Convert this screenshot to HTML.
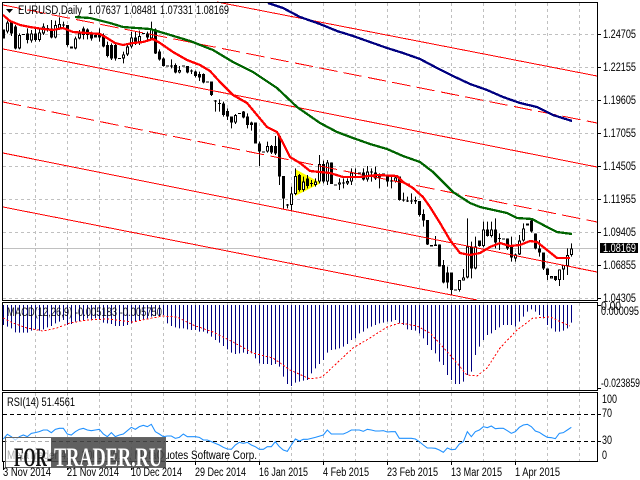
<!DOCTYPE html>
<html><head><meta charset="utf-8"><title>EURUSD</title>
<style>
html,body{margin:0;padding:0;background:#fff;width:640px;height:480px;overflow:hidden}
svg{display:block}
text{font-family:"Liberation Sans",sans-serif;font-size:11.5px;fill:#000}
.c{shape-rendering:crispEdges;fill:none}
</style></head><body>
<svg width="640" height="480" viewBox="0 0 640 480" xmlns="http://www.w3.org/2000/svg">
<rect width="640" height="480" fill="#fff"/>
<!-- grid -->
<path class="c" stroke="#c0c0c0" stroke-dasharray="3 3" d="M35.5 3V461M67.5 3V461M99.5 3V461M131.5 3V461M163.5 3V461M195.5 3V461M227.5 3V461M259.5 3V461M291.5 3V461M323.5 3V461M355.5 3V461M387.5 3V461M419.5 3V461M451.5 3V461M483.5 3V461M515.5 3V461M547.5 3V461M579.5 3V461"/>
<path class="c" stroke="#c0c0c0" stroke-dasharray="3 3" d="M3 34.5H597M3 67.5H597M3 100.5H597M3 133.5H597M3 166.5H597M3 199.5H597M3 232.5H597M3 265.5H597M3 298.5H597"/>
<path class="c" stroke="#c0c0c0" d="M3 248.5H597"/>
<!-- yellow triangle -->
<polygon points="295,169 321,183 295,196" fill="#ffff00"/>
<!-- candles group 1 -->
<g transform="scale(1 .33333)">
<path class="c" stroke="#000" d="M7.5 62V100M11.5 62V108M15.5 75V148M19.5 100V148M27.5 85V130M31.5 90V128M35.5 85V125M39.5 85V125M43.5 70V105M47.5 75V95M51.5 60V115M55.5 62V115M59.5 52V90M63.5 65V85M67.5 75V140M75.5 110V148M79.5 90V118M83.5 80V118M87.5 85V118M91.5 95V122M99.5 85V125M103.5 100V142M107.5 125V172M111.5 130V180M115.5 130V182M123.5 155V190M127.5 135V168M131.5 95V145M135.5 95V135M139.5 92V135M147.5 95V125M151.5 65V118M155.5 85V162M159.5 148V182M163.5 172V200M171.5 178V205M175.5 190V220M179.5 198V220M187.5 198V220M191.5 208V222M195.5 212V232M199.5 215V243M203.5 220V250M211.5 245V288M215.5 300V335M219.5 298V335M223.5 305V350M227.5 325V360M231.5 350V385M235.5 342V372M243.5 333V355M247.5 340V385M251.5 365V392M259.5 425V498M267.5 425V458M271.5 435V462M275.5 408V465M279.5 405V555M283.5 528V628M287.5 612V625M291.5 560V635M295.5 505V585M299.5 522V575M303.5 530V575M307.5 525V565M311.5 540V560"/>
<path class="c" stroke="#000" stroke-width="3" d="M3.5 88V115M7.5 68V95M11.5 68V100M15.5 80V145M19.5 105V145M23.5 102V105M27.5 100V120M31.5 100V122M35.5 100V120M39.5 97V120M43.5 80V100M47.5 84V87M51.5 85V113M55.5 75V113M59.5 72V85M63.5 74V77M67.5 75V135M71.5 140V145M75.5 115V145M79.5 100V115M83.5 85V105M87.5 88V105M91.5 100V115M95.5 105V112M99.5 100V112M103.5 105V140M107.5 135V168M111.5 135V175M115.5 135V175M119.5 174V177M123.5 163V175M127.5 140V163M131.5 112V140M135.5 112V130M139.5 108V130M143.5 99V102M147.5 100V112M151.5 88V115M155.5 88V160M159.5 155V178M163.5 175V198M167.5 197V200M171.5 196V199M175.5 195V218M179.5 210V218M183.5 197V200M187.5 198V218M191.5 212V215M195.5 215V228M199.5 222V232M203.5 222V248M207.5 244V247M211.5 245V285M215.5 302V305M219.5 309V312M223.5 310V345M227.5 333V350M231.5 350V368M235.5 345V368M239.5 339V342M243.5 335V352M247.5 350V375M251.5 368V375M255.5 368V430M259.5 430V455M263.5 454V457M267.5 438V455M271.5 438V458M275.5 438V460M279.5 408V530M283.5 528V595M287.5 614V617M291.5 580V615M295.5 528V582M299.5 525V570M303.5 545V570M307.5 535V558M311.5 549V552"/>
<path class="c" stroke="#fff" d="M7.5 71V92M19.5 108V142M31.5 103V119M39.5 100V117M43.5 83V97M55.5 78V110M59.5 75V82M75.5 118V142M79.5 103V112M123.5 166V172M127.5 143V160M131.5 115V137M139.5 111V127M151.5 91V112M179.5 213V215M235.5 348V365M267.5 441V452M291.5 583V612M295.5 531V579M303.5 548V567"/>
</g>
<!-- candles group 2 -->
<g transform="translate(0 150) scale(1 .33333)">
<path class="c" stroke="#000" d="M315.5 85V110M319.5 15V100M323.5 32V100M327.5 30V105M331.5 37V102M339.5 85V120M343.5 85V115M347.5 85V105M351.5 55V105M355.5 55V80M363.5 55V92M367.5 48V95M371.5 55V95M375.5 50V90M379.5 70V115M387.5 73V110M391.5 75V115M395.5 75V98M399.5 80V152M403.5 128V155M407.5 140V156M411.5 130V162M415.5 140V162M419.5 153V200M423.5 178V230M427.5 210V285M435.5 258V288M439.5 283V350"/>
<path class="c" stroke="#000" stroke-width="3" d="M315.5 95V105M319.5 42V95M323.5 42V95M327.5 37V95M331.5 37V102M335.5 103V107M339.5 97V103M343.5 97V100M347.5 93V100M351.5 68V95M355.5 69V72M359.5 67V70M363.5 67V88M367.5 65V88M371.5 64V67M375.5 68V85M379.5 75V82M383.5 70V78M387.5 73V95M391.5 91V94M395.5 82V95M399.5 80V150M403.5 149V152M407.5 152V155M411.5 152V155M415.5 150V155M419.5 153V195M423.5 192V212M427.5 210V283M431.5 285V290M435.5 283V288M439.5 283V350"/>
<path class="c" stroke="#fff" d="M315.5 98V102M319.5 45V92M327.5 40V92M339.5 100V101M347.5 96V97M351.5 71V92M367.5 68V85M379.5 78V79M395.5 85V92"/>
</g>
<!-- candles group 3 -->
<g transform="translate(0 200) scale(1 .33333)">
<path class="c" stroke="#000" d="M443.5 180V250M447.5 200V265M451.5 218V285M459.5 240V275M463.5 207V242M467.5 55V235M471.5 125V235M475.5 110V208M479.5 122V140M483.5 65V142M487.5 65V110M491.5 65V112M495.5 55V145M499.5 100V150M507.5 115V150M511.5 110V185M515.5 160V185M519.5 105V165M523.5 70V125M531.5 55V98M535.5 100V148M539.5 120V170M543.5 158V210M547.5 205V240M555.5 228V243M559.5 208V258M563.5 195V240M567.5 145V225M571.5 130V170"/>
<path class="c" stroke="#000" stroke-width="3" d="M443.5 195V248M447.5 218V248M451.5 218V270M455.5 269V272M459.5 240V270M463.5 232V242M467.5 140V232M471.5 140V205M475.5 140V205M479.5 122V138M483.5 88V138M487.5 88V108M491.5 88V108M495.5 88V128M499.5 114V117M503.5 116V119M507.5 115V145M511.5 140V172M515.5 163V175M519.5 122V163M523.5 85V122M527.5 70V76M531.5 62V95M535.5 100V145M539.5 145V158M543.5 158V205M547.5 205V225M551.5 228V235M555.5 228V240M559.5 208V240M563.5 195V208M567.5 165V198M571.5 145V165"/>
<path class="c" stroke="#fff" d="M459.5 243V267M463.5 235V239M467.5 143V229M475.5 143V202M483.5 91V135M491.5 91V105M515.5 166V172M519.5 125V160M523.5 88V119M551.5 231V232M559.5 211V237M563.5 198V205M567.5 168V195M571.5 148V162"/>
</g>
<!-- channel lines -->
<g class="c" stroke="#ff0000">
<path d="M217 2L597 76"/>
<path stroke-dasharray="18.5 6.3" d="M3 5L597 123"/>
<path d="M3 49L597 167"/>
<path stroke-dasharray="18.5 6.3" d="M3 102L597 222"/>
<path d="M3 153L597 272"/>
<path d="M3 207L477 300"/>
</g>
<!-- MAs -->
<polyline class="c" stroke="#ff0000" stroke-width="2.3" points="3,15 10,21 20,25 30,27 43,29 53,30 63,28 73,32 87,33 100,34 107,38 115,43 123,45 133,43 143,42 153,39 160,43 173,52 187,60 200,65 210,71 220,82 233,95 247,103 257,115 267,127 277,132 283,143 290,157 300,163 310,171 320,172 330,173 343,177 360,177 377,175 397,176 403,182 413,188 423,197 430,207 440,223 450,240 460,253 470,255 480,253 490,247 500,243 510,246 520,245 530,241 537,242 547,250 557,258 570,258"/>
<polyline class="c" stroke="#006400" stroke-width="2.3" points="75,17 90,18 110,23 123,27 150,29 167,34 190,41 213,50 233,62 253,72 277,88 297,107 320,123 337,132 353,138 370,144 387,149 403,156 420,162 433,172 453,192 470,203 480,207 507,213 517,218 532,219 547,227 557,232 572,234"/>
<polyline class="c" stroke="#000080" stroke-width="2.3" points="268,3 283,8 300,17 320,24 337,31 353,36 370,42 387,48 403,53 420,59 437,68 453,76 470,84 487,90 503,97 520,103 537,107 553,115 572,121"/>
<!-- MACD bars -->
<g transform="translate(0 240) scale(1 .33333)">
<path class="c" stroke="#000080" d="M3.5 195V255M7.5 195V260M11.5 195V265M15.5 195V277M19.5 195V278M23.5 195V278M27.5 195V278M31.5 195V272M35.5 195V268M39.5 195V272M43.5 195V268M47.5 195V262M51.5 195V258M55.5 195V250M59.5 195V245M63.5 195V240M67.5 195V255M71.5 195V252M75.5 195V245M79.5 195V243M83.5 195V240M87.5 195V235M91.5 195V238M95.5 195V235M99.5 195V240M103.5 195V248M107.5 195V250M111.5 195V252M115.5 195V258M119.5 195V258M123.5 195V258M127.5 195V255M131.5 195V250M135.5 195V245M139.5 195V240M143.5 195V238M147.5 195V235M151.5 195V230M155.5 195V228M159.5 195V228M163.5 195V225M167.5 195V250M171.5 195V258M175.5 195V262M179.5 195V265M183.5 195V265M187.5 195V268M191.5 195V270M195.5 195V270M199.5 195V275M203.5 195V275M207.5 195V280M211.5 195V290M215.5 195V300M219.5 195V308M223.5 195V318M227.5 195V328M231.5 195V338M235.5 195V342M239.5 195V340M243.5 195V338M247.5 195V342M251.5 195V340M255.5 195V355M259.5 195V370M263.5 195V372M267.5 195V372M271.5 195V375M275.5 195V372M279.5 195V380M283.5 195V410M287.5 195V432M291.5 195V438M295.5 195V428M299.5 195V425M303.5 195V422M307.5 195V420M311.5 195V400M315.5 195V385M319.5 195V372M323.5 195V360M327.5 195V338M331.5 195V330M335.5 195V328M339.5 195V325M343.5 195V320M347.5 195V312M351.5 195V300M355.5 195V295M359.5 195V280M363.5 195V275M367.5 195V265M371.5 195V260M375.5 195V255M379.5 195V250M383.5 195V248M387.5 195V245M391.5 195V245M395.5 195V240M399.5 195V250M403.5 195V255M407.5 195V268M411.5 195V270M415.5 195V272M419.5 195V280M423.5 195V295M427.5 195V315M431.5 195V330M435.5 195V340M439.5 195V365M443.5 195V375M447.5 195V405M451.5 195V420M455.5 195V432M459.5 195V432M463.5 195V425M467.5 195V405M471.5 195V395M475.5 195V345M479.5 195V320M483.5 195V300M487.5 195V285M491.5 195V280M495.5 195V270M499.5 195V262M503.5 195V255M507.5 195V255M511.5 195V255M515.5 195V260M519.5 195V245M523.5 195V230M527.5 195V215M531.5 195V208M535.5 195V215M539.5 195V225M543.5 195V235M547.5 195V255M551.5 195V265M555.5 195V275M559.5 195V275M563.5 195V272M567.5 195V265M571.5 195V248"/>
</g>
<polyline class="c" stroke="#ff0000" stroke-dasharray="2 2" points="3,318 13,323 27,328 43,331 57,328 70,323 87,320 107,319 133,322 147,319 163,316 177,317 193,325 213,332 233,342 253,353 273,358 290,370 310,379 322,377 337,363 353,348 370,338 387,327 400,323 417,326 430,333 443,347 457,363 467,375 477,376 487,368 500,348 517,330 533,318 550,317 570,326"/>
<!-- RSI -->
<path class="c" stroke="#000" stroke-dasharray="4 3" d="M3 414.5H597M3 441.5H597"/>
<g transform="translate(0 240) scale(.33333)">
<polyline fill="none" stroke="#1e90ff" stroke-width="3.2" points="10,597 22,583 34,590 46,600 58,590 70,585 82,590 94,580 106,578 118,575 130,570 142,570 154,578 166,568 178,565 190,565 202,582 214,585 226,575 238,568 250,565 262,570 274,572 286,570 298,568 310,582 322,590 334,578 346,590 358,585 370,582 382,572 394,562 406,568 418,560 430,556 442,560 454,553 466,575 478,582 490,590 502,588 514,588 526,595 538,592 550,582 562,590 574,590 586,590 598,592 610,600 622,600 634,605 646,610 658,615 670,622 682,627 694,628 706,615 718,607 730,610 742,607 754,615 766,620 778,628 790,628 802,620 814,620 826,605 838,620 850,630 862,634 874,615 886,597 898,603 910,598 922,598 934,595 946,592 970,585 982,570 994,582 1006,582 1018,582 1030,582 1042,577 1054,570 1066,570 1078,570 1090,574 1102,568 1114,570 1126,573 1138,573 1150,572 1162,576 1174,575 1186,575 1198,595 1210,595 1222,595 1234,595 1246,597 1258,605 1270,615 1282,624 1294,624 1306,625 1318,630 1330,637 1342,624 1354,629 1366,628 1378,612 1390,605 1402,575 1414,590 1426,575 1438,570 1450,560 1462,563 1474,558 1486,566 1498,565 1510,565 1522,572 1534,580 1546,575 1558,562 1570,555 1582,553 1594,560 1606,573 1618,577 1630,585 1642,592 1654,593 1666,596 1678,580 1690,578 1702,570 1714,562"/>
</g>
<!-- frames -->
<g class="c" stroke="#000">
<path d="M2.5 2V300.5M2.5 302.5V390.5M2.5 392.5V461.5"/>
<path d="M597.5 2V300.5M597.5 302.5V390.5M597.5 392.5V461.5"/>
<path d="M2 2.5H598M2 300.5H598M2 302.5H598M2 390.5H598M2 392.5H598M2 461.5H598"/>
<path d="M598 34.5h3M598 67.5h3M598 100.5h3M598 133.5h3M598 166.5h3M598 199.5h3M598 232.5h3M598 265.5h3M598 298.5h3M598 305.5h3M598 388.5h3M598 414.5h3M598 441.5h3"/>
<path d="M3.5 462v8M67.5 462v8M131.5 462v8M195.5 462v3M259.5 462v3M323.5 462v3M387.5 462v3M451.5 462v3M515.5 462v3"/>
</g>
<!-- header -->
<polygon points="6,9 13,9 9.5,13" fill="#000"/>
<text x="18" y="14" textLength="64" lengthAdjust="spacingAndGlyphs" fill="#123">EURUSD,Daily</text>
<text x="88" y="14" textLength="33" lengthAdjust="spacingAndGlyphs">1.07637</text>
<text x="124" y="14" textLength="33" lengthAdjust="spacingAndGlyphs">1.08481</text>
<text x="160" y="14" textLength="33" lengthAdjust="spacingAndGlyphs">1.07331</text>
<text x="196" y="14" textLength="33" lengthAdjust="spacingAndGlyphs">1.08169</text>
<!-- price axis -->
<text x="603" y="38" textLength="33" lengthAdjust="spacingAndGlyphs">1.24705</text>
<text x="603" y="71" textLength="33" lengthAdjust="spacingAndGlyphs">1.22155</text>
<text x="603" y="104" textLength="33" lengthAdjust="spacingAndGlyphs">1.19605</text>
<text x="603" y="137" textLength="33" lengthAdjust="spacingAndGlyphs">1.17055</text>
<text x="603" y="170" textLength="33" lengthAdjust="spacingAndGlyphs">1.14505</text>
<text x="603" y="203" textLength="33" lengthAdjust="spacingAndGlyphs">1.11955</text>
<text x="603" y="236" textLength="33" lengthAdjust="spacingAndGlyphs">1.09405</text>
<rect x="600" y="243" width="38" height="10" fill="#000"/>
<text x="603" y="252" textLength="33" lengthAdjust="spacingAndGlyphs" style="fill:#fff">1.08169</text>
<text x="603" y="269" textLength="33" lengthAdjust="spacingAndGlyphs">1.06855</text>
<text x="603" y="302" textLength="33" lengthAdjust="spacingAndGlyphs">1.04305</text>
<!-- MACD labels -->
<text x="7" y="316" textLength="155" lengthAdjust="spacingAndGlyphs" fill="#123" opacity=".85">MACD(12,26,9) -0.005183 -0.005750</text>
<text x="601" y="310" textLength="20" lengthAdjust="spacingAndGlyphs">0.00</text>
<text x="601" y="315" textLength="38" lengthAdjust="spacingAndGlyphs">0.000095</text>
<text x="601" y="387" textLength="39" lengthAdjust="spacingAndGlyphs">-0.023859</text>
<!-- RSI labels -->
<text x="7" y="406" textLength="68" lengthAdjust="spacingAndGlyphs">RSI(14) 51.4561</text>
<text x="602" y="403" textLength="15" lengthAdjust="spacingAndGlyphs">100</text>
<text x="602" y="417" textLength="10" lengthAdjust="spacingAndGlyphs">70</text>
<text x="602" y="444" textLength="10" lengthAdjust="spacingAndGlyphs">30</text>
<text x="602" y="459" textLength="5" lengthAdjust="spacingAndGlyphs">0</text>
<!-- copyright -->
<text x="7" y="459" textLength="250" lengthAdjust="spacingAndGlyphs">MetaTrader 4, © 2001-2014, MetaQuotes Software Corp.</text>
<!-- watermark -->
<rect x="5" y="437" width="46" height="31" fill="#fff" fill-opacity=".68"/>
<rect x="51" y="437" width="114" height="31" fill="#4a4a4a" fill-opacity=".88"/>
<rect x="5.5" y="437.5" width="160" height="30" fill="none" stroke="#666" class="c"/>
<text x="14" y="466" textLength="38" lengthAdjust="spacingAndGlyphs" style="font-family:'Liberation Serif',serif;font-weight:bold;font-size:26px;fill:#111">FOR-</text>
<text x="54" y="466" textLength="108" lengthAdjust="spacingAndGlyphs" style="font-family:'Liberation Serif',serif;font-weight:bold;font-size:26px;fill:#fff">TRADER.RU</text>
<!-- time axis -->
<text x="3" y="476" textLength="48" lengthAdjust="spacingAndGlyphs">3 Nov 2014</text>
<text x="67" y="476" textLength="52" lengthAdjust="spacingAndGlyphs">21 Nov 2014</text>
<text x="131" y="476" textLength="51" lengthAdjust="spacingAndGlyphs">10 Dec 2014</text>
<text x="195" y="476" textLength="51" lengthAdjust="spacingAndGlyphs">29 Dec 2014</text>
<text x="259" y="476" textLength="49" lengthAdjust="spacingAndGlyphs">16 Jan 2015</text>
<text x="323" y="476" textLength="46" lengthAdjust="spacingAndGlyphs">4 Feb 2015</text>
<text x="387" y="476" textLength="51" lengthAdjust="spacingAndGlyphs">23 Feb 2015</text>
<text x="451" y="476" textLength="51" lengthAdjust="spacingAndGlyphs">13 Mar 2015</text>
<text x="515" y="476" textLength="45" lengthAdjust="spacingAndGlyphs">1 Apr 2015</text>
</svg>
</body></html>
